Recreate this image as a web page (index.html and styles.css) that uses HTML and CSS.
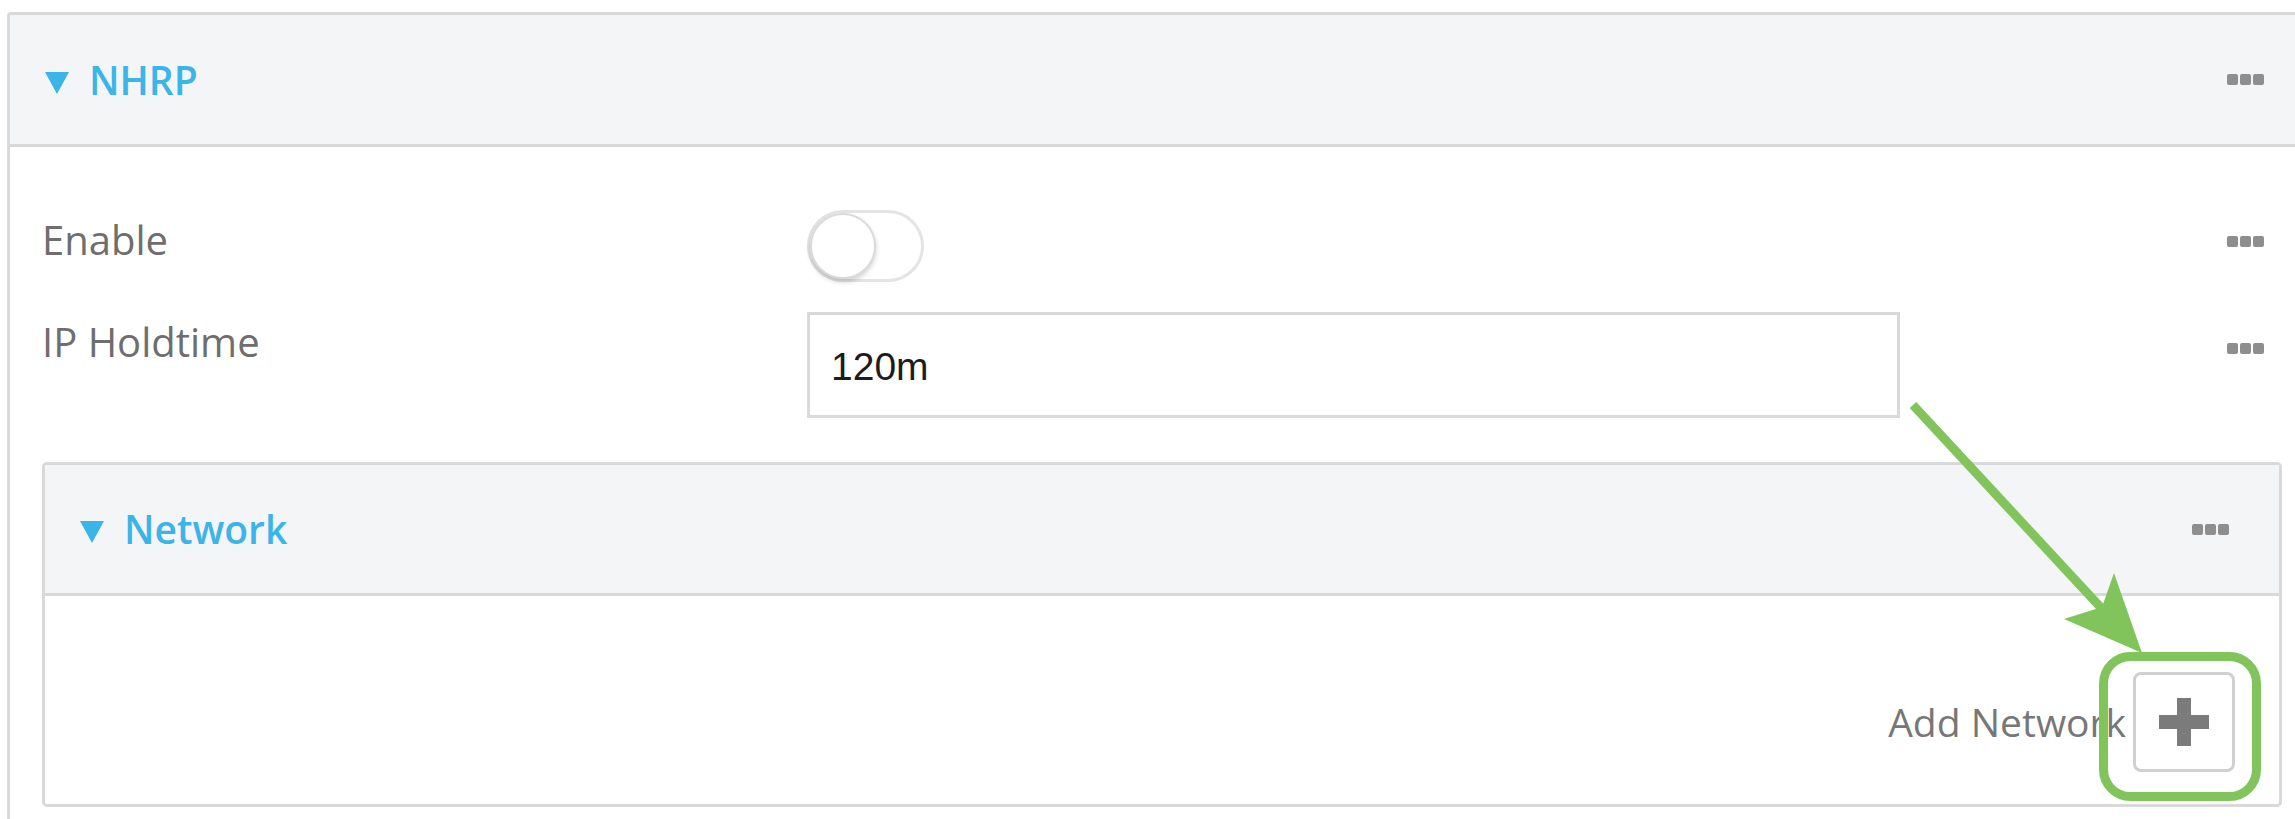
FILE: index.html
```html
<!DOCTYPE html>
<html>
<head>
<meta charset="utf-8">
<link rel="stylesheet" href="styles.css">
</head>
<body>
<div class="panel panel-outer">
  <div class="panel-head">
    <span class="caret"></span>
    <span class="panel-title">NHRP</span>
    <span class="dots"><i></i><i></i><i></i></span>
  </div>
  <div class="panel-body">
    <div class="row">
      <div class="label">Enable</div>
      <div class="control">
        <span class="toggle"><span class="knob"></span></span>
      </div>
      <span class="dots dots-enable"><i></i><i></i><i></i></span>
    </div>
    <div class="row row-ip">
      <div class="label">IP Holdtime</div>
      <div class="control">
        <div class="text-input">120m</div>
      </div>
      <span class="dots dots-ip"><i></i><i></i><i></i></span>
    </div>
    <div class="panel panel-inner">
      <div class="panel-head">
        <span class="caret"></span>
        <span class="panel-title">Network</span>
        <span class="dots"><i></i><i></i><i></i></span>
      </div>
      <div class="add-body">
        <span class="add-label">Add Network</span>
        <span class="add-btn">
          <svg width="50" height="48" viewBox="0 0 50 48"><rect x="0" y="17" width="50" height="14" fill="#7b7b7b"/><rect x="18" y="0" width="14" height="48" fill="#7b7b7b"/></svg>
        </span>
      </div>
    </div>
  </div>
</div>
<svg class="annot" width="2295" height="819" viewBox="0 0 2295 819">
  <line x1="1913" y1="405" x2="2104" y2="611" stroke="#80c45b" stroke-width="9" stroke-linecap="butt"/>
  <polygon points="2142,653 2064,619 2102,607 2114,573" fill="#80c45b"/>
  <rect x="2103.5" y="656.5" width="153" height="140" rx="27" ry="27" fill="none" stroke="#80c45b" stroke-width="9"/>
</svg>
</body>
</html>
```
FILE: styles.css
```css
html, body {
  margin: 0;
  padding: 0;
  background: #ffffff;
  overflow: hidden;
}
body {
  width: 2295px;
  height: 819px;
  position: relative;
  font-family: "Open Sans", "Liberation Sans", sans-serif;
}
.panel {
  box-sizing: border-box;
  border: 3px solid #d9d9d9;
  background: #ffffff;
}
.panel-outer {
  width: 2310px;
  margin: 12px 0 0 7px;
  border-radius: 4px;
}
.panel-inner {
  margin: 44px 32px 0 32px;
  border-radius: 5px;
}
.panel-head {
  display: flex;
  align-items: center;
  height: 129px;
  background: #f4f5f7;
  border-bottom: 3px solid #d9d9d9;
  padding: 0 50px 0 35px;
}
.panel-inner .panel-head {
  height: 128px;
}
.caret {
  width: 0;
  height: 0;
  border-left: 12px solid transparent;
  border-right: 12px solid transparent;
  border-top: 22px solid #3bb4e7;
  margin-top: 6px;
}
.panel-title {
  margin-left: 20px;
  font-size: 39px;
  font-weight: 600;
  color: #3bb4e7;
  line-height: 52px;
}
.dots {
  margin-left: auto;
  display: flex;
  gap: 2px;
}
.dots i {
  display: block;
  width: 11px;
  height: 11px;
  background: #8e8e8e;
  border-radius: 2px;
}
.panel-body {
  padding: 63px 0 30px 0;
}
.row {
  display: flex;
  align-items: flex-start;
  padding: 0 50px 0 32px;
}
.row-ip {
  margin-top: 30px;
}
.label {
  width: 765px;
  flex: none;
  margin-top: 3px;
  font-size: 40px;
  line-height: 54px;
  color: #6e6e6e;
}
.control {
  display: flex;
}
.dots-enable {
  margin-top: 26px;
}
.dots-ip {
  margin-top: 31px;
}
.toggle {
  box-sizing: border-box;
  display: flex;
  align-items: center;
  width: 117px;
  height: 72px;
  border: 3px solid #e4e4e4;
  border-radius: 36px;
  background: #ffffff;
}
.knob {
  box-sizing: border-box;
  width: 66px;
  height: 66px;
  border-radius: 50%;
  background: #ffffff;
  border: 2px solid #dadada;
  box-shadow: 0 3px 5px rgba(0, 0, 0, 0.18);
}
.text-input {
  box-sizing: border-box;
  display: flex;
  align-items: center;
  width: 1093px;
  height: 106px;
  border: 3px solid #d9d9d9;
  padding: 4px 20px 0 21px;
  font-family: "Liberation Sans", Arial, sans-serif;
  font-size: 39px;
  color: #1c1c1c;
}
.add-body {
  display: flex;
  justify-content: flex-end;
  align-items: center;
  padding: 76px 44px 32px 44px;
}
.add-label {
  font-size: 39px;
  line-height: 54px;
  color: #777777;
  margin-right: 7px;
}
.add-btn {
  box-sizing: border-box;
  display: flex;
  align-items: center;
  justify-content: center;
  width: 102px;
  height: 100px;
  border: 3px solid #d0d0d0;
  border-radius: 8px;
  background: #ffffff;
}
.annot {
  position: absolute;
  left: 0;
  top: 0;
  pointer-events: none;
}
```
